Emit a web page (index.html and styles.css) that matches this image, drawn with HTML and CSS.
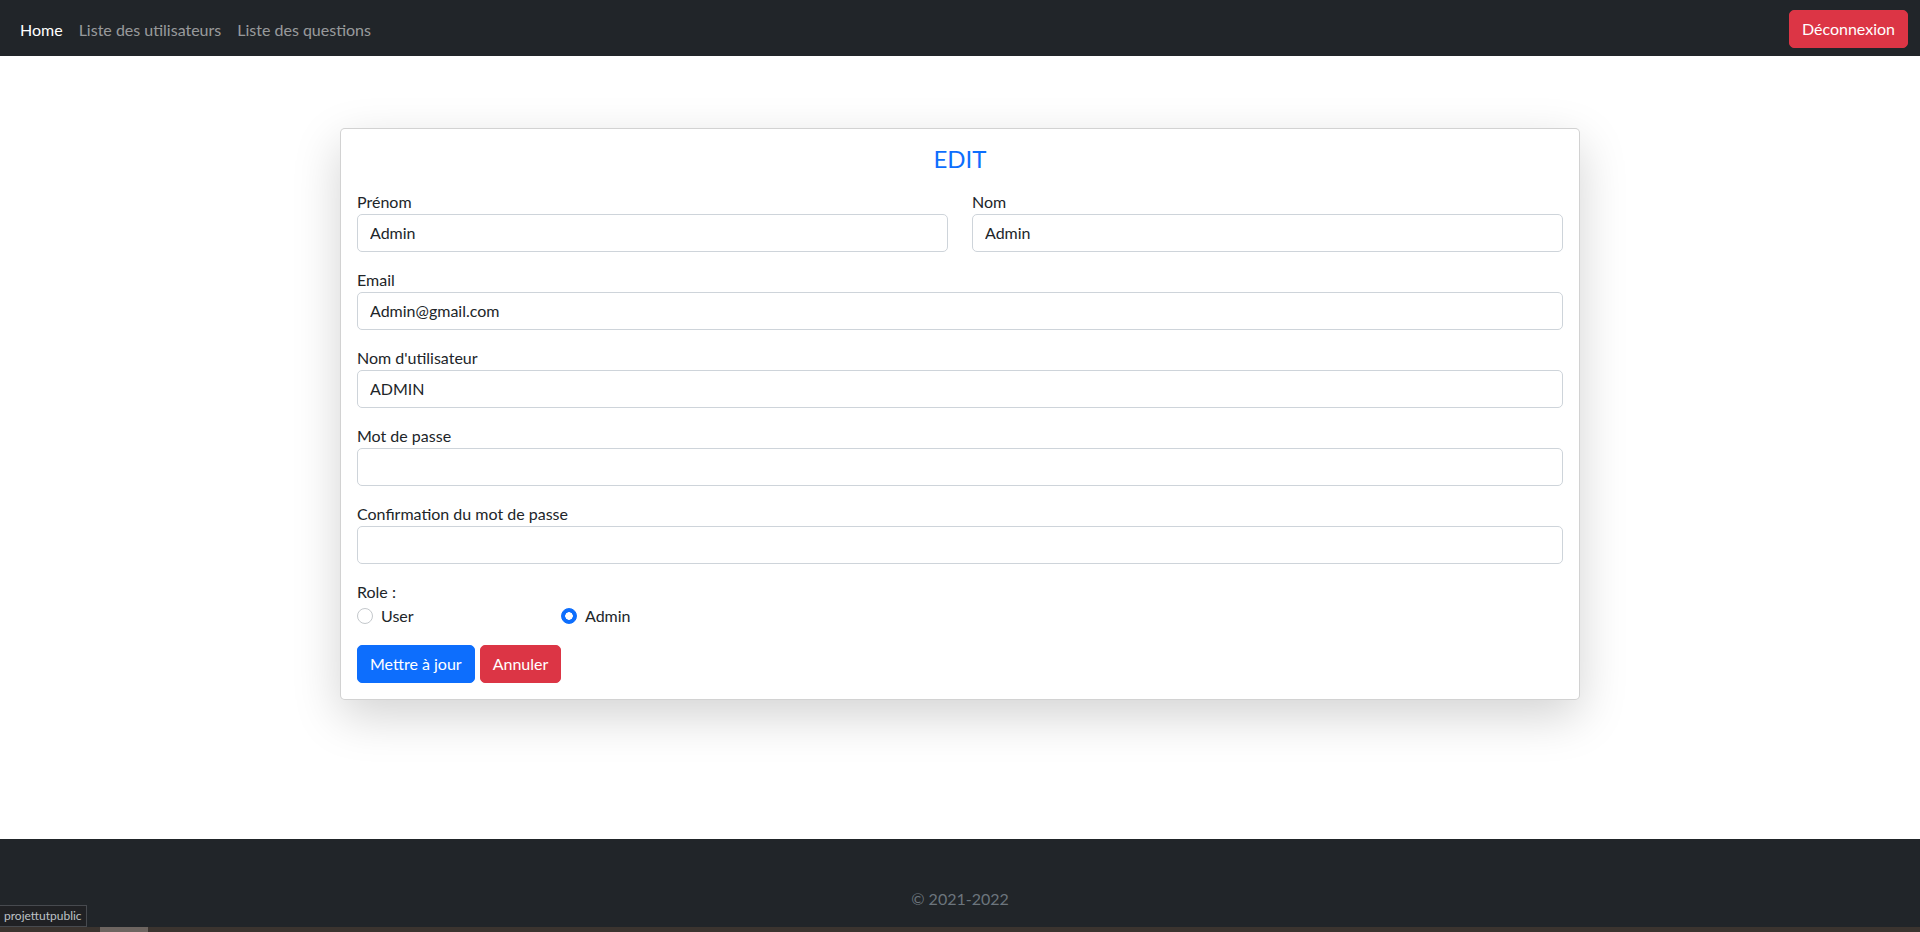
FILE: index.html
```html
<!DOCTYPE html>
<html lang="fr">
<head>
    <meta charset="UTF-8">
    <meta name="viewport" content="width=device-width, initial-scale=1.0">
    <title>Edit</title>
    <link rel="stylesheet" href="styles.css">
</head>
<body>
    <nav class="navbar">
        <ul class="nav-links">
            <li><a class="nav-link active" href="#">Home</a></li>
            <li><a class="nav-link" href="#">Liste des utilisateurs</a></li>
            <li><a class="nav-link" href="#">Liste des questions</a></li>
        </ul>
        <a class="btn btn-danger btn-logout" href="#">Déconnexion</a>
    </nav>

    <main class="main">
        <div class="card">
            <h4 class="card-title">EDIT</h4>
            <form>
                <div class="row-2">
                    <div class="field">
                        <label for="prenom">Prénom</label>
                        <input class="form-control" type="text" id="prenom" value="Admin">
                    </div>
                    <div class="field">
                        <label for="nom">Nom</label>
                        <input class="form-control" type="text" id="nom" value="Admin">
                    </div>
                </div>
                <div class="field">
                    <label for="email">Email</label>
                    <input class="form-control" type="email" id="email" value="Admin@gmail.com">
                </div>
                <div class="field">
                    <label for="username">Nom d'utilisateur</label>
                    <input class="form-control" type="text" id="username" value="ADMIN">
                </div>
                <div class="field">
                    <label for="password">Mot de passe</label>
                    <input class="form-control" type="password" id="password">
                </div>
                <div class="field">
                    <label for="confirm">Confirmation du mot de passe</label>
                    <input class="form-control" type="password" id="confirm">
                </div>

                <label class="role-label">Role :</label>
                <div class="radios">
                    <label class="form-check">
                        <input type="radio" name="role" value="user">
                        <span>User</span>
                    </label>
                    <label class="form-check">
                        <input type="radio" name="role" value="admin" checked>
                        <span>Admin</span>
                    </label>
                </div>

                <div class="actions">
                    <button type="submit" class="btn btn-primary">Mettre à jour</button>
                    <a class="btn btn-danger" href="#">Annuler</a>
                </div>
            </form>
        </div>
    </main>

    <footer class="footer">
        <p>&copy; 2021-2022</p>
    </footer>

    <div class="status-tip">projettutpublic</div>
    <div class="bottom-strip"><span class="strip-thumb"></span></div>
</body>
</html>
```

FILE: styles.css
```css
* {
    box-sizing: border-box;
}

body {
    margin: 0;
    font-family: Lato, "Noto Sans", sans-serif;
    font-size: 16px;
    line-height: 1.5;
    color: #212529;
    background: #fff;
}

/* navbar */
.navbar {
    display: flex;
    align-items: center;
    justify-content: space-between;
    height: 56px;
    padding: 8px 12px;
    background: #212529;
}

.nav-links {
    display: flex;
    margin: 0;
    padding: 0;
    list-style: none;
}

.nav-link {
    display: block;
    padding: 10px 8px 6px;
    color: rgba(255, 255, 255, 0.55);
    text-decoration: none;
}

.nav-link.active {
    color: #fff;
}

/* buttons */
.btn {
    display: inline-block;
    padding: 6px 12px;
    font-family: inherit;
    font-size: 16px;
    line-height: 1.5;
    color: #fff;
    text-decoration: none;
    border: 1px solid transparent;
    border-radius: 5px;
    cursor: pointer;
}

.btn-logout {
    margin-top: 2px;
}

.btn-danger {
    background: #dc3545;
    border-color: #dc3545;
}

.btn-primary {
    background: #0d6efd;
    border-color: #0d6efd;
}

/* card */
.main {
    min-height: 783px;
    padding-top: 72px;
}

.card {
    width: 1240px;
    margin: 0 auto;
    padding: 16px;
    background: #fff;
    border: 1px solid rgba(0, 0, 0, 0.175);
    border-radius: 5px;
    box-shadow: 0 16px 48px rgba(0, 0, 0, 0.175);
}

.card-title {
    margin: 0 0 16px;
    font-size: 24px;
    font-weight: 400;
    line-height: 1.2;
    text-align: center;
    color: #0d6efd;
}

.row-2 {
    display: grid;
    grid-template-columns: 1fr 1fr;
    gap: 24px;
}

.field {
    margin-bottom: 16px;
}

.field label,
.role-label {
    display: block;
}

.form-control {
    display: block;
    width: 100%;
    height: 38px;
    padding: 6px 12px;
    font-family: inherit;
    font-size: 16px;
    line-height: 1.5;
    color: #212529;
    background: #fff;
    border: 1px solid #ced4da;
    border-radius: 5px;
}

/* radios */
.radios {
    display: flex;
    margin-bottom: 17px;
}

.form-check {
    display: flex;
    align-items: center;
    gap: 8px;
    width: 204px;
    height: 24px;
}

.form-check input {
    appearance: none;
    width: 16px;
    height: 16px;
    margin: 0;
    border: 1px solid #c4c8cc;
    border-radius: 50%;
    background: #fff;
}

.form-check input:checked {
    border-color: #0d6efd;
    background: radial-gradient(circle, #fff 0 3.5px, #0d6efd 4px);
}

.actions {
    display: flex;
    gap: 5px;
}

/* footer */
.footer {
    padding: 48px 0;
    background: #212529;
    text-align: center;
}

.footer p {
    margin: 0;
    color: #6c757d;
}

.status-tip {
    position: fixed;
    left: 0;
    bottom: 5px;
    height: 22px;
    padding: 0 4px;
    font-size: 12px;
    line-height: 20px;
    color: #bdc1c6;
    background: #202124;
    border: 1px solid #474a4f;
    border-left: 0;
}

.bottom-strip {
    position: fixed;
    left: 0;
    right: 0;
    bottom: 0;
    height: 5px;
    background: #3b342f;
}

.strip-thumb {
    position: absolute;
    left: 100px;
    top: 0;
    width: 48px;
    height: 5px;
    background: #6d6560;
}
```
